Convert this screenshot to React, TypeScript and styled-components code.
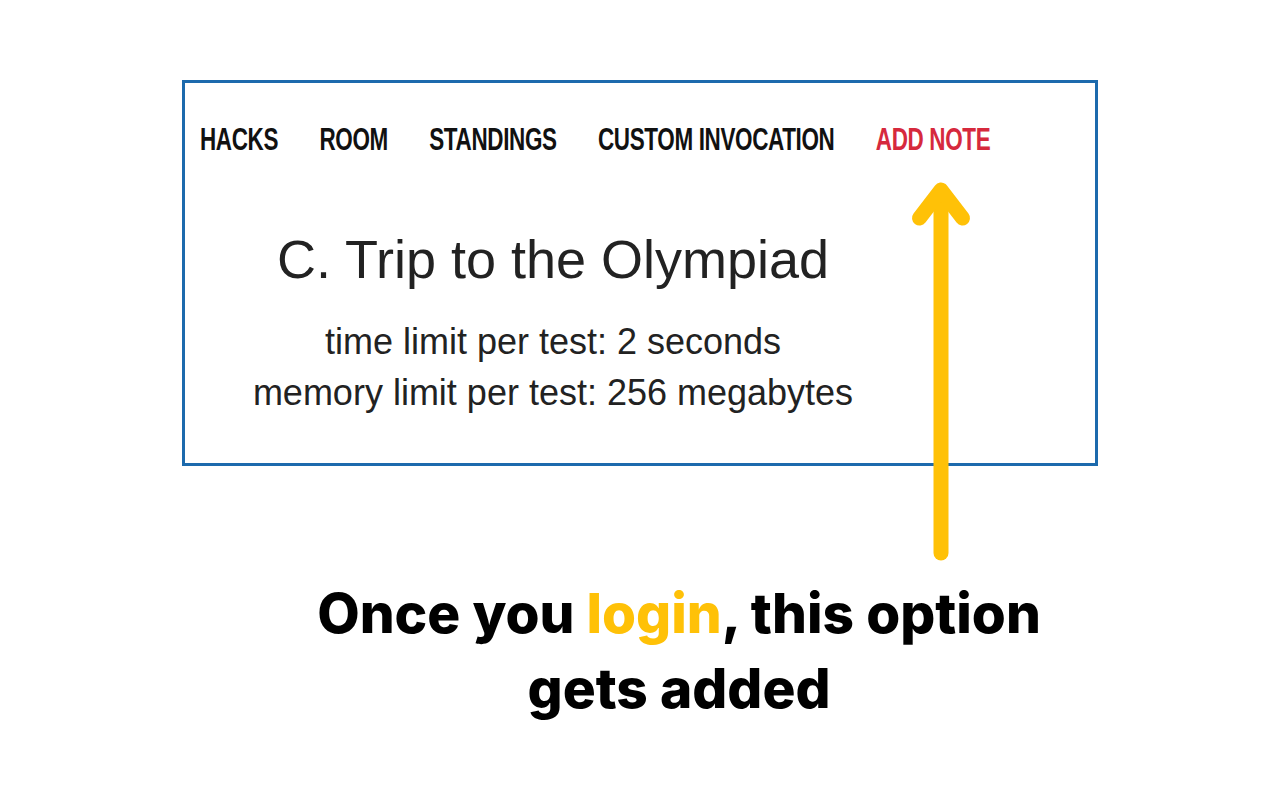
import React from "react";
import styled, { createGlobalStyle } from "styled-components";

const Global = createGlobalStyle`
  html, body { margin: 0; padding: 0; background: #ffffff; }
  body { width: 1280px; height: 800px; overflow: hidden; }
`;

const Page = styled.div`
  position: relative;
  width: 1280px;
  height: 800px;
  padding: 80px 0 0 182px;
  box-sizing: border-box;
  display: flex;
  flex-direction: column;
`;

const Card = styled.section`
  width: 916px;
  height: 386px;
  box-sizing: border-box;
  border: 3px solid #1c6aad;
  display: flex;
  flex-direction: column;
  padding: 39px 0 0 15px;
`;

const Nav = styled.nav`
  display: flex;
  gap: 57px;
  white-space: nowrap;
  transform: scaleX(0.725);
  transform-origin: left center;
`;

const NavItem = styled.span<{ $accent?: boolean }>`
  font-family: "Liberation Sans", Arial, sans-serif;
  font-weight: 700;
  font-size: 31px;
  line-height: 36px;
  letter-spacing: -0.5px;
  color: ${(p) => (p.$accent ? "#d6293d" : "#111111")};
`;

const Header = styled.div`
  width: 706px;
  display: flex;
  flex-direction: column;
  align-items: center;
  margin-top: 71px;
  font-family: "Liberation Sans", Arial, sans-serif;
  color: #222222;
  white-space: nowrap;
`;

const Title = styled.h1`
  margin: 0 0 27px;
  font-weight: 400;
  font-size: 54px;
  line-height: 60px;
`;

const Limit = styled.div`
  font-size: 36px;
  line-height: 51px;
`;

const Caption = styled.div`
  width: 994px;
  margin-top: 110px;
  text-align: center;
  font-family: Inter, "Noto Sans", sans-serif;
  font-weight: 800;
  font-size: 55px;
  line-height: 75px;
  color: #000000;
`;

const Highlight = styled.span`
  color: #ffc107;
`;

const Arrow = styled.svg`
  position: absolute;
  left: 900px;
  top: 170px;
`;

export default function App() {
  return (
    <>
      <Global />
      <Page>
        <Card>
          <Nav>
            <NavItem>HACKS</NavItem>
            <NavItem>ROOM</NavItem>
            <NavItem>STANDINGS</NavItem>
            <NavItem>CUSTOM INVOCATION</NavItem>
            <NavItem $accent>ADD NOTE</NavItem>
          </Nav>
          <Header>
            <Title>C. Trip to the Olympiad</Title>
            <Limit>time limit per test: 2 seconds</Limit>
            <Limit>memory limit per test: 256 megabytes</Limit>
          </Header>
        </Card>
        <Caption>
          Once you <Highlight>login</Highlight>, this option
          <br />
          gets added
        </Caption>
        <Arrow width="90" height="410" viewBox="0 0 90 410">
          <g stroke="#ffc107" strokeWidth="15" strokeLinecap="round" strokeLinejoin="round" fill="none">
            <line x1="41" y1="22" x2="41" y2="383" />
            <polyline points="19.5,48 41,20 62.5,48" />
          </g>
        </Arrow>
      </Page>
    </>
  );
}
